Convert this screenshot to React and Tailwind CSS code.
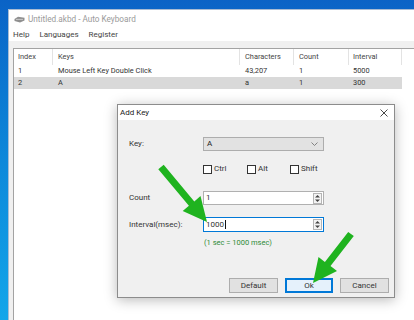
import React from 'react'

const columns = [
    { label: 'Index', w: 'w-[39px] pl-[4px]' },
    { label: 'Keys', w: 'w-[187px] pl-[5px]' },
    { label: 'Characters', w: 'w-[54px] pl-[5px]' },
    { label: 'Count', w: 'w-[55px] pl-[5px]' },
    { label: 'Interval', w: 'w-[53px] pl-[4px]' },
]

const rows = [
    ['1', 'Mouse Left Key Double Click', '43,207', '1', '5000'],
    ['2', 'A', 'a', '1', '300'],
]

function Spin() {
    return (
        <svg width="9" height="11" viewBox="0 0 9 11" className="mr-[1px]">
            <rect x="0.5" y="0.5" width="8" height="10" fill="#f4f4f4" stroke="#b5b5b5" />
            <path d="M2 4.5 L4.5 2 L7 4.5 Z" fill="#444" />
            <path d="M2 6.5 L4.5 9 L7 6.5 Z" fill="#444" />
        </svg>
    )
}

function CheckItem({ label, w }) {
    return (
        <div className={`flex items-center ${w}`}>
            <div className="w-[9px] h-[9px] border border-[#333] bg-white" />
            <span className="ml-[2px]">{label}</span>
        </div>
    )
}

function Row({ label, children, className = '' }) {
    return (
        <div className={`flex items-center pl-[11px] ${className}`}>
            <span className="w-[74px]">{label}</span>
            {children}
        </div>
    )
}

function AddKeyDialog() {
    return (
        <div className="absolute left-[117px] top-[104px] w-[278px] h-[194px] border border-[#8c8c8c] bg-[#f0f0f0] shadow-[0_2px_12px_rgba(0,0,0,0.28)] text-[8px] text-[#333]">
            <div className="h-[15px] bg-white flex items-center justify-between pl-[2px] pr-[6px]">
                <span className="text-[#222]">Add Key</span>
                <svg width="8" height="8" viewBox="0 0 8 8">
                    <path d="M0.5 0.5 L7.5 7.5 M7.5 0.5 L0.5 7.5" stroke="#333" strokeWidth="0.9" />
                </svg>
            </div>

            <Row label="Key:" className="mt-[17px]">
                <div className="w-[121px] h-[14px] bg-[#e2e2e2] border border-[#adadad] flex items-center justify-between pl-[3px] pr-[5px]">
                    <span className="text-[#222]">A</span>
                    <svg width="7" height="4" viewBox="0 0 7 4">
                        <path d="M0.5 0.5 L3.5 3.5 L6.5 0.5" fill="none" stroke="#777" strokeWidth="0.9" />
                    </svg>
                </div>
            </Row>

            <div className="flex items-center pl-[85px] mt-[13px] h-[10px]">
                <CheckItem label="Ctrl" w="w-[44px]" />
                <CheckItem label="Alt" w="w-[43px]" />
                <CheckItem label="Shift" w="" />
            </div>

            <Row label="Count" className="mt-[17px]">
                <div className="w-[121px] h-[14px] bg-white border border-[#b0b0b0] flex items-center justify-between pl-[2px]">
                    <span>1</span>
                    <Spin />
                </div>
            </Row>

            <Row label="Interval(msec):" className="mt-[12px]">
                <div className="w-[121px] h-[15px] bg-white border border-[#0078d7] flex items-center justify-between pl-[2px]">
                    <span className="flex items-center">
                        1000
                        <span className="inline-block w-px h-[9px] bg-[#111] ml-[1px]" />
                    </span>
                    <Spin />
                </div>
            </Row>

            <div className="pl-[86px] mt-[6px] h-[10px] flex items-center text-[#2e8b36] text-[7.5px]">
                (1 sec = 1000 msec)
            </div>

            <div className="flex justify-end gap-[7px] pr-[5px] mt-[30px]">
                <button className="w-[49px] h-[15px] bg-[#e1e1e1] border border-[#adadad] text-[#333]">Default</button>
                <button className="w-[48px] h-[15px] bg-[#e5f1fb] border-2 border-[#0078d7] text-[#333]">Ok</button>
                <button className="w-[49px] h-[15px] bg-[#e1e1e1] border border-[#adadad] text-[#333]">Cancel</button>
            </div>
        </div>
    )
}

function Arrows() {
    return (
        <svg className="absolute left-0 top-0 pointer-events-none" width="414" height="320" viewBox="0 0 414 320">
            <polygon
                points="163.7,164.8 194.3,201.4 200.5,196 207,222 182.7,211 188.9,205.8 158.3,169.2"
                fill="#1fb31f"
            />
            <polygon
                points="348.2,231.9 324.9,261.9 318.5,257 313,283 337,271 330.5,266.1 353.8,236.1"
                fill="#1fb31f"
            />
        </svg>
    )
}

export default function App() {
    return (
        <div className="relative w-[414px] h-[320px] overflow-hidden bg-gradient-to-b from-[#0b63c6] via-[#0e88da] to-[#14a6ea] font-['Roboto',sans-serif] text-[8px] text-[#333]">
            <div className="pl-[8px] pt-[9px] h-full">
                <div className="h-full bg-[#f0f0f0] border-l border-t border-[#a9bcd3] flex flex-col">
                    <div className="h-[19px] bg-white flex items-center pl-[5px]">
                        <svg width="11" height="7" viewBox="0 0 11 7">
                            <path d="M0.5 3 L4 0.8 L10.5 1.8 L10.5 4.5 L6 6.5 L0.5 5 Z" fill="#8f8f8f" />
                            <path d="M2 3.4 L9 3.4" stroke="#d8d8d8" strokeWidth="0.8" />
                        </svg>
                        <span className="ml-[3px] text-[#9a9a9a] text-[8.2px]">Untitled.akbd - Auto Keyboard</span>
                    </div>
                    <div className="h-[12px] bg-white flex items-center pl-[4px] gap-[10px] text-[#444]">
                        <span>Help</span>
                        <span>Languages</span>
                        <span>Register</span>
                    </div>
                    <div className="h-[7px]" />
                    <div className="flex-1 ml-[4px] border-l border-t border-[#a3a3a3] bg-white text-[7.4px]">
                        <div className="flex h-[16px] text-[#444]">
                            {columns.map((c) => (
                                <div key={c.label} className={`${c.w} flex items-center border-r border-[#e3e3e3]`}>
                                    {c.label}
                                </div>
                            ))}
                        </div>
                        {rows.map((r, i) => (
                            <div key={i} className={`flex h-[12px] w-[388px] ${i === 1 ? 'bg-[#d9d9d9]' : ''}`}>
                                {r.map((cell, j) => (
                                    <div key={j} className={`${columns[j].w} flex items-center`}>
                                        {cell}
                                    </div>
                                ))}
                            </div>
                        ))}
                    </div>
                </div>
            </div>
            <AddKeyDialog />
            <Arrows />
        </div>
    )
}
